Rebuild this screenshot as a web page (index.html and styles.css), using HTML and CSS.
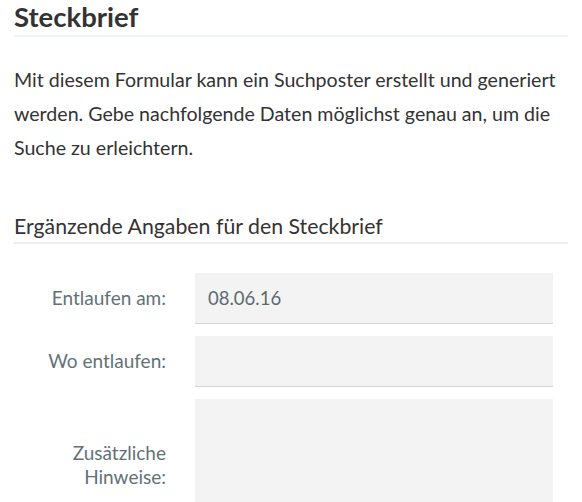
FILE: index.html
```html
<!DOCTYPE html>
<html lang="de">
<head>
    <meta charset="UTF-8">
    <meta name="viewport" content="width=device-width, initial-scale=1.0">
    <title>Steckbrief</title>
    <link rel="stylesheet" href="styles.css">
</head>
<body>
    <div class="container">
        <h1 class="page-title">Steckbrief</h1>
        <p class="intro">Mit diesem Formular kann ein Suchposter erstellt und generiert werden. Gebe nachfolgende Daten möglichst genau an, um die Suche zu erleichtern.</p>

        <h2 class="section-title">Ergänzende Angaben für den Steckbrief</h2>
        <form class="poster-form">
            <div class="form-row">
                <label for="lostDate">Entlaufen am:</label>
                <input type="text" id="lostDate" name="lostDate" value="08.06.16">
            </div>
            <div class="form-row">
                <label for="lostPlace">Wo entlaufen:</label>
                <input type="text" id="lostPlace" name="lostPlace">
            </div>
            <div class="form-row">
                <label for="notes">Zusätzliche<br>Hinweise:</label>
                <textarea id="notes" name="notes"></textarea>
            </div>
        </form>
    </div>
</body>
</html>
```

FILE: styles.css
```css
body {
    margin: 0;
    font-family: Lato, "Open Sans", sans-serif;
    color: #333;
    background: #fff;
}
.container {
    padding: 0 14px;
}
.page-title {
    margin: 0;
    font-size: 27.5px;
    font-weight: 700;
    line-height: 1.2;
    padding-bottom: 2px;
    border-bottom: 2px solid #f0f5f8;
}
.intro {
    margin: 26px 0 0;
    font-size: 19.6px;
    line-height: 34px;
}
.section-title {
    margin: 49px 0 0;
    font-size: 21.3px;
    font-weight: 400;
    line-height: 1.2;
    padding-bottom: 2px;
    border-bottom: 2px solid #eeeeee;
}
.poster-form {
    margin-top: 29px;
    padding-right: 15px;
}
.form-row {
    display: grid;
    grid-template-columns: 152px 1fr;
    column-gap: 29px;
    align-items: center;
    margin-bottom: 12px;
}
.form-row label {
    text-align: right;
    font-size: 19px;
    line-height: 24px;
    color: #617277;
}
.form-row input,
.form-row textarea {
    box-sizing: border-box;
    width: 100%;
    height: 51px;
    padding: 0 13px;
    font-family: inherit;
    font-size: 18.5px;
    color: #5b6b70;
    background: #f3f3f3;
    border: none;
    border-bottom: 1px solid #d3d6d8;
    border-radius: 0;
    outline: none;
}
.form-row textarea {
    height: 132px;
    resize: none;
}
```
